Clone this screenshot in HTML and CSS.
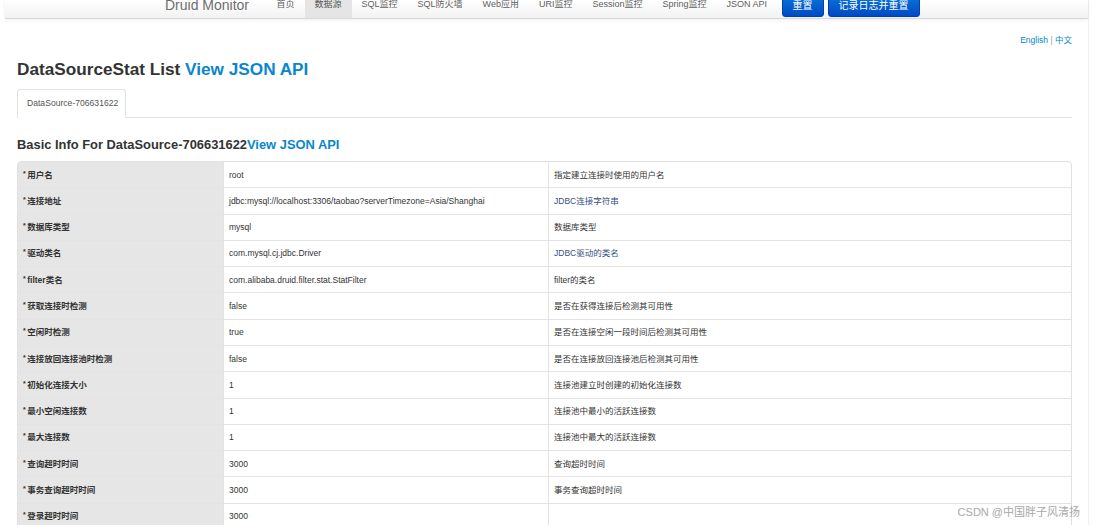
FILE: index.html
```html
<!DOCTYPE html>
<html lang="zh">
<head>
<meta charset="utf-8">
<title>Druid Monitor</title>
<link rel="stylesheet" href="styles.css">
</head>
<body>
<div class="page">
  <div class="navbar">
    <div class="nav-inner">
      <span class="brand">Druid Monitor</span>
      <a class="nav-link">首页</a>
      <a class="nav-link active">数据源</a>
      <a class="nav-link">SQL监控</a>
      <a class="nav-link">SQL防火墙</a>
      <a class="nav-link">Web应用</a>
      <a class="nav-link">URI监控</a>
      <a class="nav-link">Session监控</a>
      <a class="nav-link">Spring监控</a>
      <a class="nav-link">JSON API</a>
      <a class="btn first">重置</a>
      <a class="btn">记录日志并重置</a>
    </div>
  </div>

  <div class="content">
    <div class="lang"><a>English</a> <span class="sep">|</span> <a>中文</a></div>
    <h1 class="title">DataSourceStat List <a>View JSON API</a></h1>
    <div class="tabs"><span class="tab">DataSource-706631622</span></div>
    <h2 class="subtitle">Basic Info For DataSource-706631622<a>View JSON API</a></h2>

    <table class="info">
      <colgroup><col class="c1"><col class="c2"><col class="c3"></colgroup>
      <tbody>
        <tr><th><span class="req">*</span>用户名</th><td>root</td><td>指定建立连接时使用的用户名</td></tr>
        <tr><th><span class="req">*</span>连接地址</th><td>jdbc:mysql://localhost:3306/taobao?serverTimezone=Asia/Shanghai</td><td class="blue">JDBC连接字符串</td></tr>
        <tr><th><span class="req">*</span>数据库类型</th><td>mysql</td><td>数据库类型</td></tr>
        <tr><th><span class="req">*</span>驱动类名</th><td>com.mysql.cj.jdbc.Driver</td><td class="blue">JDBC驱动的类名</td></tr>
        <tr><th><span class="req">*</span>filter类名</th><td>com.alibaba.druid.filter.stat.StatFilter</td><td>filter的类名</td></tr>
        <tr><th><span class="req">*</span>获取连接时检测</th><td>false</td><td>是否在获得连接后检测其可用性</td></tr>
        <tr><th><span class="req">*</span>空闲时检测</th><td>true</td><td>是否在连接空闲一段时间后检测其可用性</td></tr>
        <tr><th><span class="req">*</span>连接放回连接池时检测</th><td>false</td><td>是否在连接放回连接池后检测其可用性</td></tr>
        <tr><th><span class="req">*</span>初始化连接大小</th><td>1</td><td>连接池建立时创建的初始化连接数</td></tr>
        <tr><th><span class="req">*</span>最小空闲连接数</th><td>1</td><td>连接池中最小的活跃连接数</td></tr>
        <tr><th><span class="req">*</span>最大连接数</th><td>1</td><td>连接池中最大的活跃连接数</td></tr>
        <tr><th><span class="req">*</span>查询超时时间</th><td>3000</td><td>查询超时时间</td></tr>
        <tr><th><span class="req">*</span>事务查询超时时间</th><td>3000</td><td>事务查询超时时间</td></tr>
        <tr><th><span class="req">*</span>登录超时时间</th><td>3000</td><td></td></tr>
      </tbody>
    </table>
  </div>
</div>
<div class="watermark">CSDN @中国胖子风清扬</div>
</body>
</html>
```

FILE: styles.css
```css
html, body {
  margin: 0;
  padding: 0;
  overflow: hidden;
  background: #fff;
}
body {
  font-family: "Liberation Sans", "Noto Sans CJK SC", sans-serif;
  color: #333;
  height: 525px;
  position: relative;
}
.page {
  margin-left: 5px;
  width: 1083px;
  min-height: 525px;
  border-right: 1px solid #f0f0f0;
}
.navbar {
  height: 18px;
  overflow: hidden;
  background: linear-gradient(#ffffff, #f2f2f2);
  border-bottom: 1px solid #d8d8d8;
  box-shadow: 0 1px 4px rgba(0, 0, 0, 0.07);
}
.nav-inner {
  display: flex;
  align-items: center;
  height: 36px;
  margin-top: -13px;
  padding-left: 160px;
}
.brand {
  font-size: 14px;
  color: #6f6f6f;
  margin-right: 17.5px;
}
.nav-link {
  font-size: 9px;
  color: #5e5e5e;
  padding: 0 10px;
  height: 36px;
  line-height: 34px;
}
.nav-link.active {
  background: #e5e5e5;
  color: #555;
}
.btn {
  font-size: 10px;
  color: #fff;
  height: 23px;
  line-height: 21px;
  padding: 0 10px;
  margin-left: 4px;
  border-radius: 3px;
  background: linear-gradient(#0a77d8, #0049c6);
  border: 1px solid #0040b0;
  box-sizing: border-box;
}
.btn.first {
  margin-left: 4.5px;
}
.content {
  padding-left: 12px;
  width: 1055px;
}
.lang {
  margin-top: 16px;
  text-align: right;
  font-size: 8.5px;
  line-height: 11px;
  color: #0088cc;
}
.lang .sep {
  color: #999;
}
.title {
  margin: 13px 0 0;
  font-size: 17.2px;
  line-height: 20px;
  font-weight: bold;
  color: #333;
}
.title a, .subtitle a {
  color: #0a86cc;
}
.tabs {
  margin-top: 10px;
  display: flex;
  border-bottom: 1px solid #e2e2e2;
}
.tab {
  font-size: 8.6px;
  color: #555;
  height: 27px;
  line-height: 27px;
  padding: 0 7px 1px 9px;
  border: 1px solid #e2e2e2;
  border-bottom: none;
  border-radius: 3px 3px 0 0;
  margin-bottom: -1px;
  background: #fff;
}
.subtitle {
  margin: 19px 0 0;
  font-size: 12.9px;
  line-height: 16px;
  font-weight: bold;
  color: #333;
}
.info {
  margin-top: 8px;
  width: 1055px;
  border-collapse: separate;
  border-spacing: 0;
  border: 1px solid #e0e0e0;
  border-radius: 4px;
  table-layout: fixed;
  font-size: 8.5px;
}
.info col.c1 { width: 205px; }
.info col.c2 { width: 325px; }
.info th, .info td {
  padding: 5.65px 5px;
  line-height: 14px;
  text-align: left;
  vertical-align: top;
  border-top: 1px solid #e3e3e3;
  white-space: nowrap;
}
.info tr:first-child th, .info tr:first-child td {
  border-top: none;
}
.info th {
  background: #e6e6e6;
  font-weight: bold;
  color: #333;
}
.info tr:first-child th {
  border-top-left-radius: 3px;
}
.info td {
  border-left: 1px solid #e3e3e3;
  color: #333;
  font-weight: normal;
}
.info td.blue {
  color: #34507f;
}
.req {
  font-size: 7px;
  margin-right: 1.5px;
  vertical-align: top;
  line-height: 12px;
}
.watermark {
  position: absolute;
  right: 15px;
  bottom: 6px;
  font-size: 11px;
  line-height: 14px;
  color: #a8a8a8;
}
```
